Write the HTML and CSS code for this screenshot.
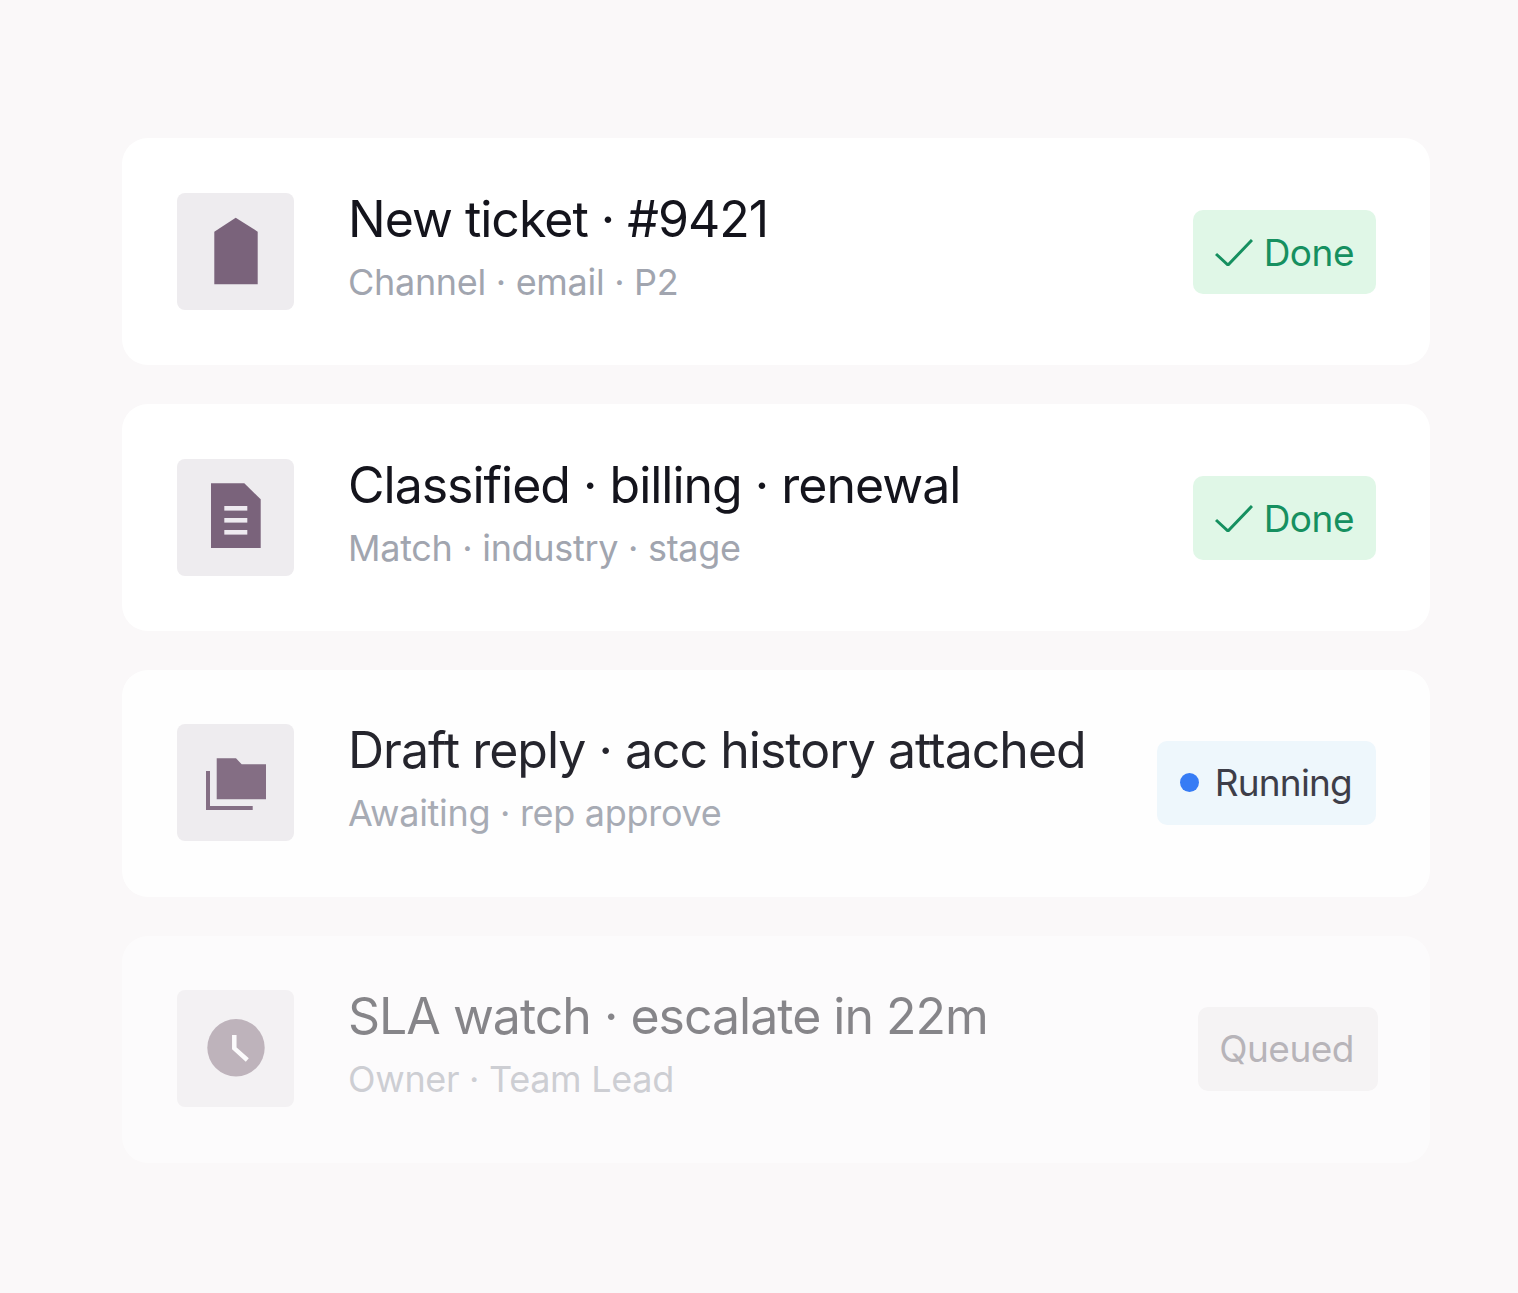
FILE: index.html
```html
<!DOCTYPE html>
<html lang="en">
<head>
  <meta charset="UTF-8">
  <meta name="viewport" content="width=device-width, initial-scale=1.0">
  <title>Ticket workflow</title>
  <link rel="stylesheet" href="styles.css">
</head>
<body>
  <div class="list">
    <div class="card">
      <div class="tile">
        <svg class="icon" viewBox="0 0 117 117"><polygon points="37.3,38.7 58.7,24.7 80.7,38.7 80.7,91.3 37.3,91.3"/></svg>
      </div>
      <div class="text">
        <div class="title">New ticket · #9421</div>
        <div class="sub">Channel · email · P2</div>
      </div>
      <div class="badge done">
        <svg class="check" viewBox="0 0 38 27"><polyline points="1,15 13,26 37,1"/></svg>
        Done
      </div>
    </div>

    <div class="card">
      <div class="tile">
        <svg class="icon" viewBox="0 0 117 117">
          <polygon points="34,24.3 67.3,24.3 83.7,40.3 83.7,89 34,89"/>
          <rect class="cut" x="47.3" y="47" width="23" height="4.6"/>
          <rect class="cut" x="47.3" y="59" width="23" height="4.6"/>
          <rect class="cut" x="47.3" y="71" width="23" height="4.6"/>
        </svg>
      </div>
      <div class="text">
        <div class="title">Classified · billing · renewal</div>
        <div class="sub">Match · industry · stage</div>
      </div>
      <div class="badge done">
        <svg class="check" viewBox="0 0 38 27"><polyline points="1,15 13,26 37,1"/></svg>
        Done
      </div>
    </div>

    <div class="card card-fade">
      <div class="tile">
        <svg class="icon" viewBox="0 0 117 117">
          <polygon points="39.7,34.3 59,34.3 64.7,40.3 89,40.3 89,75.3 39.7,75.3"/>
          <polygon points="29,47 33,47 33,82 75.7,82 75.7,86 29,86"/>
        </svg>
      </div>
      <div class="text">
        <div class="title">Draft reply · acc history attached</div>
        <div class="sub">Awaiting · rep approve</div>
      </div>
      <div class="badge running">
        <span class="dot"></span>
        Running
      </div>
    </div>

    <div class="card card-faint">
      <div class="tile">
        <svg class="icon" viewBox="0 0 117 117">
          <circle cx="59" cy="57.7" r="28.7"/>
          <polyline class="hands" points="57.3,45 57.3,58.3 70.3,70"/>
        </svg>
      </div>
      <div class="text">
        <div class="title">SLA watch · escalate in 22m</div>
        <div class="sub">Owner · Team Lead</div>
      </div>
      <div class="badge queued">Queued</div>
    </div>
  </div>
</body>
</html>
```

FILE: styles.css
```css
body {
  font-family: Inter, "Liberation Sans", sans-serif;
  margin: 0;
  padding: 138px 88px 0 122px;
  height: 1293px;
  box-sizing: border-box;
  overflow: hidden;
  background-color: #faf8f9;
}
.list {
  display: flex;
  flex-direction: column;
  gap: 39px;
}
.card {
  display: flex;
  align-items: center;
  background: #fff;
  padding: 55px 54px 55px 55px;
  border-radius: 26px;
}
.card-fade {
  padding-top: 54px;
  padding-bottom: 56px;
  opacity: 0.92;
}
.card-faint {
  padding-top: 54px;
  padding-bottom: 56px;
  opacity: 0.5;
}
.card-faint .icon {
  fill: #84707f;
}
.tile {
  flex: none;
  width: 117px;
  height: 117px;
  background: #eeecef;
  border-radius: 8px;
}
.icon {
  display: block;
  width: 117px;
  height: 117px;
  fill: #7a637b;
}
.cut {
  fill: #eeeaf0;
}
.hands {
  fill: none;
  stroke: #fff;
  stroke-width: 4.5;
}
.text {
  flex: 1;
  margin-left: 54px;
  margin-top: -12px;
}
.title {
  font-size: 50px;
  line-height: 62px;
  color: #14141c;
  letter-spacing: -1px;
}
.sub {
  font-size: 36px;
  line-height: 44px;
  margin-top: 10px;
  color: #a1a5af;
  letter-spacing: -0.3px;
}
.badge {
  display: flex;
  align-items: center;
  flex: none;
  box-sizing: border-box;
  height: 84px;
  padding: 0 22px;
  font-size: 37px;
  letter-spacing: -0.5px;
  border-radius: 10px;
}
.done {
  padding-top: 2px;
  background: #e0f7e7;
  color: #169060;
}
.check {
  width: 38px;
  height: 27px;
  margin-right: 11px;
  fill: none;
  stroke: #169060;
  stroke-width: 3;
}
.running {
  padding-right: 24px;
  letter-spacing: -0.8px;
  background: #eef7fd;
  color: #2f2f3a;
}
.dot {
  width: 19px;
  height: 19px;
  margin-right: 16px;
  margin-left: 1px;
  background: #2672f5;
  border-radius: 50%;
}
.queued {
  margin-right: -2px;
  padding: 0 24px 0 21px;
  background: #f1eff1;
  color: #77727b;
}
```
